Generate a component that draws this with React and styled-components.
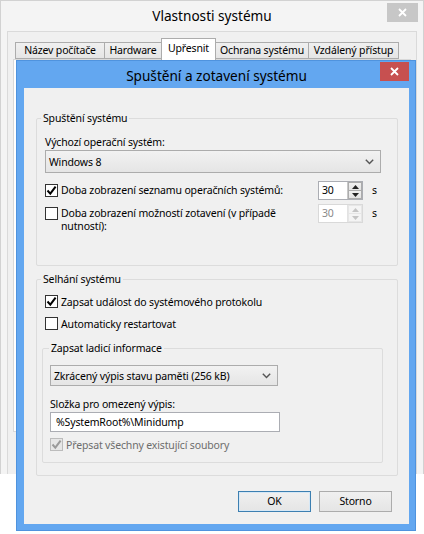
import styled, { createGlobalStyle } from 'styled-components';

const GlobalStyle = createGlobalStyle`
  html, body {
    margin: 0;
    padding: 0;
    background: #fff;
  }
  body {
    font-family: "Noto Sans", "Segoe UI", sans-serif;
    font-size: 10.5px;
    letter-spacing: -0.15px;
    line-height: 16px;
    color: #000;
  }
  * {
    box-sizing: border-box;
  }
`;

const Screen = styled.div`
  position: relative;
  width: 424px;
  height: 534px;
  overflow: hidden;
  background: #fff;
`;

/* ---------- background window ---------- */

const BackWindow = styled.div`
  width: 424px;
  height: 474px;
  display: flex;
  flex-direction: column;
  background: #f4f4f4;
  border: 1px solid #d2d2d2;
  border-bottom: none;
`;

const TitleBar = styled.div`
  display: grid;
  grid-template-columns: 1fr auto 1fr;
  align-items: start;
  height: ${({ $h }) => $h}px;
  flex: none;
`;

const Title = styled.div`
  grid-column: 2;
  margin-top: ${({ $mt }) => $mt}px;
  font-size: 13.6px;
  letter-spacing: 0;
  line-height: 20px;
  color: #000;
  white-space: nowrap;
`;

const CloseButton = styled.div`
  grid-column: 3;
  justify-self: end;
  width: ${({ $w }) => $w}px;
  height: 19px;
  margin-top: ${({ $mt }) => $mt}px;
  margin-right: ${({ $mr }) => $mr}px;
  display: flex;
  align-items: center;
  justify-content: center;
  background: ${({ $bg }) => $bg};
`;

const BackClient = styled.div`
  flex: 1;
  margin: 0 6px;
  padding: 6px 5px 42px;
  display: flex;
  flex-direction: column;
  background: #f0f0f0;
  border: 1px solid #dadada;
  border-bottom: none;
`;

const TabRow = styled.div`
  display: flex;
  align-items: flex-end;
  padding-left: 2px;
  margin-bottom: -1px;
  height: 22px;
  flex: none;
`;

const Tab = styled.div`
  width: ${({ $w }) => $w}px;
  height: ${({ $active }) => ($active ? 22 : 17)}px;
  margin-left: -1px;
  margin-bottom: ${({ $active }) => ($active ? 0 : 1)}px;
  border: 1px solid #acacac;
  border-bottom: ${({ $active }) => ($active ? 'none' : '1px solid #acacac')};
  background: ${({ $active }) =>
    $active ? '#fff' : 'linear-gradient(#f0f0f0, #e5e5e5)'};
  position: ${({ $active }) => ($active ? 'relative' : 'static')};
  z-index: ${({ $active }) => ($active ? 1 : 'auto')};
  text-align: center;
  line-height: ${({ $active }) => ($active ? 18 : 15)}px;
  white-space: nowrap;
  &:first-child {
    margin-left: 0;
  }
`;

const TabPanel = styled.div`
  flex: 1;
  background: #fff;
  border: 1px solid #d9d9d9;
`;

/* ---------- foreground dialog ---------- */

const Dialog = styled.div`
  position: absolute;
  left: 16px;
  top: 60px;
  width: 400px;
  height: 471px;
  display: flex;
  flex-direction: column;
  padding: 0 6px 6px 7px;
  background: #63a7f0;
  border: 1px solid #4f93de;
`;

const Client = styled.div`
  flex: 1;
  display: flex;
  flex-direction: column;
  padding: 0 11px 0 12px;
  background: #f0f0f0;
`;

const Group = styled.fieldset`
  margin: ${({ $mt }) => $mt}px 0 0 ${({ $ml }) => $ml || 0}px;
  padding: 0;
  width: ${({ $w }) => ($w ? `${$w}px` : 'auto')};
  min-width: 0;
  border: 1px solid #dcdcdc;
  border-radius: 2px;
`;

const Legend = styled.legend`
  margin-left: ${({ $ml }) => $ml}px;
  padding: 0 2px;
  line-height: 16px;
`;

const GroupBody = styled.div`
  display: flex;
  flex-direction: column;
  padding: ${({ $p }) => $p};
`;

const Label = styled.div`
  line-height: 16px;
  margin-top: ${({ $mt }) => $mt || 0}px;
  white-space: nowrap;
`;

const Select = styled.div`
  width: ${({ $w }) => $w}px;
  height: ${({ $h }) => $h}px;
  margin-top: ${({ $mt }) => $mt || 0}px;
  display: flex;
  align-items: center;
  justify-content: space-between;
  padding: 0 6px 0 3px;
  border: 1px solid #acacac;
  background: linear-gradient(#f2f2f2, #e5e5e5);
`;

const TextInput = styled.div`
  width: ${({ $w }) => $w}px;
  height: 20px;
  padding-left: 5px;
  line-height: 18px;
  border: 1px solid #abadb3;
  background: #fff;
`;

const OptionRow = styled.div`
  display: flex;
  align-items: flex-start;
  width: ${({ $w }) => ($w ? `${$w}px` : 'auto')};
  margin-top: ${({ $mt }) => $mt || 0}px;
  color: ${({ $disabled }) => ($disabled ? '#6d6d6d' : '#000')};
`;

const Box = styled.span`
  flex: none;
  width: 13px;
  height: 13px;
  margin-top: ${({ $mt }) => $mt || 1}px;
  margin-right: ${({ $gap }) => $gap || 3}px;
  display: flex;
  align-items: center;
  justify-content: center;
  border: 1px solid ${({ $disabled }) => ($disabled ? '#bcbcbc' : '#333')};
  background: ${({ $disabled }) => ($disabled ? '#e6e6e6' : '#fff')};
`;

const OptionText = styled.span`
  flex: ${({ $grow }) => ($grow ? 1 : 'none')};
  line-height: ${({ $lh }) => $lh || 16}px;
  margin-top: ${({ $mt }) => $mt || 0}px;
`;

const Spin = styled.div`
  flex: none;
  display: flex;
  width: 45px;
  height: 19px;
  border: 1px solid ${({ $disabled }) => ($disabled ? '#d9d9d9' : '#abadb3')};
  background: #fff;
`;

const SpinValue = styled.div`
  flex: 1;
  padding-left: 3px;
  line-height: 17px;
  color: ${({ $disabled }) => ($disabled ? '#8a8a8a' : '#000')};
`;

const SpinButtons = styled.div`
  width: 15px;
  display: flex;
  flex-direction: column;
  border-left: 1px solid ${({ $disabled }) => ($disabled ? '#e3e3e3' : '#c8c8c8')};
`;

const SpinButton = styled.div`
  flex: 1;
  display: flex;
  align-items: center;
  justify-content: center;
  background: ${({ $disabled }) =>
    $disabled ? '#f4f4f4' : 'linear-gradient(#f0f0f0, #e3e3e3)'};
  border: 1px solid ${({ $disabled }) => ($disabled ? '#e6e6e6' : '#acacac')};
  & + & {
    border-top: none;
  }
`;

const Unit = styled.span`
  flex: none;
  width: 18px;
  padding-left: 9px;
  line-height: 16px;
  margin-top: 1px;
`;

const ButtonRow = styled.div`
  display: flex;
  justify-content: flex-end;
  gap: 8px;
  margin-top: 15px;
  margin-right: 6px;
`;

const Button = styled.div`
  width: 73px;
  height: 21px;
  line-height: 19px;
  text-align: center;
  border: 1px solid ${({ $default }) => ($default ? '#3c7fb1' : '#acacac')};
  background: linear-gradient(#f0f0f0, #e5e5e5);
  box-shadow: ${({ $default }) => ($default ? 'inset 0 0 0 1px #d6e8f6' : 'none')};
`;

/* ---------- small drawings ---------- */

function CloseGlyph() {
  return (
    <svg width="9" height="9" viewBox="0 0 9 9">
      <path d="M1 1 L8 8 M8 1 L1 8" stroke="#fff" strokeWidth="1.8" />
    </svg>
  );
}

function CheckGlyph({ color }) {
  return (
    <svg width="11" height="11" viewBox="0 0 11 11">
      <path
        d="M1.5 5.5 L4.3 8.6 L9.6 1.6"
        fill="none"
        stroke={color}
        strokeWidth="2"
      />
    </svg>
  );
}

function Chevron() {
  return (
    <svg width="9" height="6" viewBox="0 0 9 6">
      <path d="M0.8 0.8 L4.5 4.6 L8.2 0.8" fill="none" stroke="#555" strokeWidth="1.4" />
    </svg>
  );
}

function Triangle({ up, color }) {
  return (
    <svg width="7" height="4" viewBox="0 0 7 4">
      <path d={up ? 'M0 4 L3.5 0 L7 4 Z' : 'M0 0 L3.5 4 L7 0 Z'} fill={color} />
    </svg>
  );
}

function CheckBox({ checked, disabled, mt }) {
  return (
    <Box $disabled={disabled} $mt={mt}>
      {checked && <CheckGlyph color={disabled ? '#9a9a9a' : '#000'} />}
    </Box>
  );
}

function SpinBox({ value, disabled }) {
  const arrow = disabled ? '#c4c4c4' : '#222';
  return (
    <Spin $disabled={disabled}>
      <SpinValue $disabled={disabled}>{value}</SpinValue>
      <SpinButtons $disabled={disabled}>
        <SpinButton $disabled={disabled}>
          <Triangle up color={arrow} />
        </SpinButton>
        <SpinButton $disabled={disabled}>
          <Triangle color={arrow} />
        </SpinButton>
      </SpinButtons>
    </Spin>
  );
}

const tabs = [
  { label: 'Název počítače', w: 90 },
  { label: 'Hardware', w: 58 },
  { label: 'Upřesnit', w: 55, active: true },
  { label: 'Ochrana systému', w: 94 },
  { label: 'Vzdálený přístup', w: 91 },
];

export default function App() {
  return (
    <>
      <GlobalStyle />
      <Screen>
        <BackWindow>
          <TitleBar $h={30}>
            <Title $mt={5}>Vlastnosti systému</Title>
            <CloseButton $w={31} $mt={2} $mr={5} $bg="#c7c7c7">
              <CloseGlyph />
            </CloseButton>
          </TitleBar>
          <BackClient>
            <TabRow>
              {tabs.map(t => (
                <Tab key={t.label} $w={t.w} $active={t.active}>
                  {t.label}
                </Tab>
              ))}
            </TabRow>
            <TabPanel />
          </BackClient>
        </BackWindow>

        <Dialog>
          <TitleBar $h={27}>
            <Title $mt={5}>Spuštění a zotavení systému</Title>
            <CloseButton $w={29} $mt={1} $mr={0} $bg="#c75050">
              <CloseGlyph />
            </CloseButton>
          </TitleBar>
          <Client>
            <Group $mt={22}>
              <Legend $ml={4}>Spuštění systému</Legend>
              <GroupBody $p="8px 8px 32px 8px">
                <Label>Výchozí operační systém:</Label>
                <Select $w={336} $h={23}>
                  <span>Windows 8</span>
                  <Chevron />
                </Select>
                <OptionRow $w={336} $mt={8}>
                  <CheckBox checked mt={3} />
                  <OptionText $grow $mt={1}>
                    Doba zobrazení seznamu operačních systémů:
                  </OptionText>
                  <SpinBox value="30" />
                  <Unit>s</Unit>
                </OptionRow>
                <OptionRow $w={336} $mt={4}>
                  <CheckBox mt={3} />
                  <OptionText $grow $lh={13} $mt={3}>
                    Doba zobrazení možností zotavení (v případě nutností):
                  </OptionText>
                  <SpinBox value="30" disabled />
                  <Unit>s</Unit>
                </OptionRow>
              </GroupBody>
            </Group>

            <Group $mt={5}>
              <Legend $ml={4}>Selhání systému</Legend>
              <GroupBody $p="7px 8px 12px 8px">
                <OptionRow>
                  <CheckBox checked />
                  <OptionText>Zapsat událost do systémového protokolu</OptionText>
                </OptionRow>
                <OptionRow $mt={6}>
                  <CheckBox />
                  <OptionText>Automaticky restartovat</OptionText>
                </OptionRow>

                <Group $mt={8} $ml={-3} $w={341}>
                  <Legend $ml={6}>Zapsat ladicí informace</Legend>
                  <GroupBody $p="9px 7px 9px 7px">
                    <Select $w={228} $h={21}>
                      <span>Zkrácený výpis stavu paměti (256 kB)</span>
                      <Chevron />
                    </Select>
                    <Label $mt={10}>Složka pro omezený výpis:</Label>
                    <TextInput $w={230}>%SystemRoot%\Minidump</TextInput>
                    <OptionRow $mt={5} $disabled>
                      <CheckBox checked disabled />
                      <OptionText>Přepsat všechny existující soubory</OptionText>
                    </OptionRow>
                  </GroupBody>
                </Group>
              </GroupBody>
            </Group>

            <ButtonRow>
              <Button $default>OK</Button>
              <Button>Storno</Button>
            </ButtonRow>
          </Client>
        </Dialog>
      </Screen>
    </>
  );
}
